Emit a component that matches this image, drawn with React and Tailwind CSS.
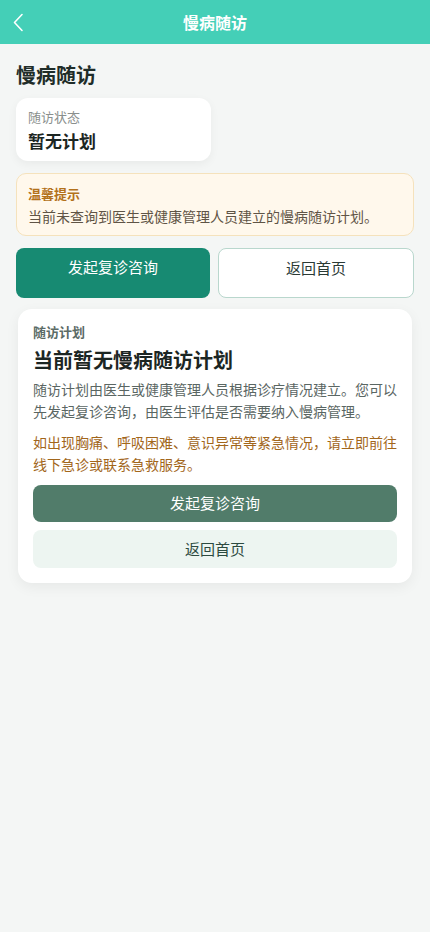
import React from 'react';

const App = () => {
  return (
    <div
      className="min-h-[932px] bg-[#f4f6f5] text-[#1f2d29]"
      style={{ fontFamily: '"Noto Sans CJK SC", "Noto Sans", sans-serif' }}
    >
      {/* header */}
      <div className="relative h-[44px] bg-[#44cfb7] flex items-center justify-center">
        <button className="absolute left-[10px] top-[12px] w-[16px] h-[20px] flex items-center justify-center">
          <svg width="12" height="19" viewBox="0 0 12 19" fill="none">
            <path d="M10 1.5L2.5 9.5L10 17.5" stroke="white" strokeWidth="1.6" strokeLinecap="round" strokeLinejoin="round" />
          </svg>
        </button>
        <h1 className="text-[16px] font-bold text-white leading-[22px]">慢病随访</h1>
      </div>

      <div className="px-4">
        <h2 className="mt-[17px] text-[20px] font-bold leading-[28px]">慢病随访</h2>

        <div className="mt-[9px] w-[195px] h-[63px] bg-white rounded-[12px] shadow-[0_3px_10px_rgba(0,0,0,0.05)] px-3 pt-[10px]">
          <div className="text-[13px] leading-[18px] text-[#8a8f8d]">随访状态</div>
          <div className="mt-[3px] text-[17px] leading-[24px] font-bold text-[#1c2623]">暂无计划</div>
        </div>

        <div className="mt-3 h-[63px] bg-[#fff8ec] border border-[#f5e2bc] rounded-[10px] px-[11px] pt-[11px]">
          <div className="text-[13px] leading-[18px] font-bold text-[#b3711b]">温馨提示</div>
          <div className="mt-[3px] text-[14px] leading-[20px] text-[#5f5446]">
            当前未查询到医生或健康管理人员建立的慢病随访计划。
          </div>
        </div>

        <div className="mt-3 flex gap-2">
          <button className="flex-1 h-[50px] rounded-[8px] bg-[#178a72] text-white text-[15px] leading-[22px] pt-[8px] flex justify-center items-start">
            发起复诊咨询
          </button>
          <button className="flex-1 h-[50px] rounded-[8px] bg-white border border-[#b9d7cd] text-[#2a3a35] text-[15px] leading-[22px] pt-[8px] flex justify-center items-start">
            返回首页
          </button>
        </div>
      </div>

      <div className="mx-[18px] mt-[11px] bg-white rounded-[14px] shadow-[0_4px_14px_rgba(0,0,0,0.06)] px-[15px] pt-[14px] pb-[15px]">
        <div className="text-[13px] leading-[18px] font-bold text-[#5b6b66]">随访计划</div>
        <div className="mt-[5px] text-[20px] leading-[28px] font-bold text-[#1c2623]">当前暂无慢病随访计划</div>
        <p className="mt-[4px] text-[14px] leading-[22px] text-[#5a6663]">
          随访计划由医生或健康管理人员根据诊疗情况建立。您可以先发起复诊咨询，由医生评估是否需要纳入慢病管理。
        </p>
        <p className="mt-[9px] text-[14px] leading-[22px] text-[#a2661b]">
          如出现胸痛、呼吸困难、意识异常等紧急情况，请立即前往线下急诊或联系急救服务。
        </p>
        <button className="mt-[10px] w-full h-[37px] rounded-[8px] bg-[#517c6a] text-white text-[15px] flex items-center justify-center">
          发起复诊咨询
        </button>
        <button className="mt-[8px] w-full h-[38px] rounded-[8px] bg-[#edf5f1] text-[#2c4a40] text-[15px] flex items-center justify-center">
          返回首页
        </button>
      </div>
    </div>
  );
};

export default App;
